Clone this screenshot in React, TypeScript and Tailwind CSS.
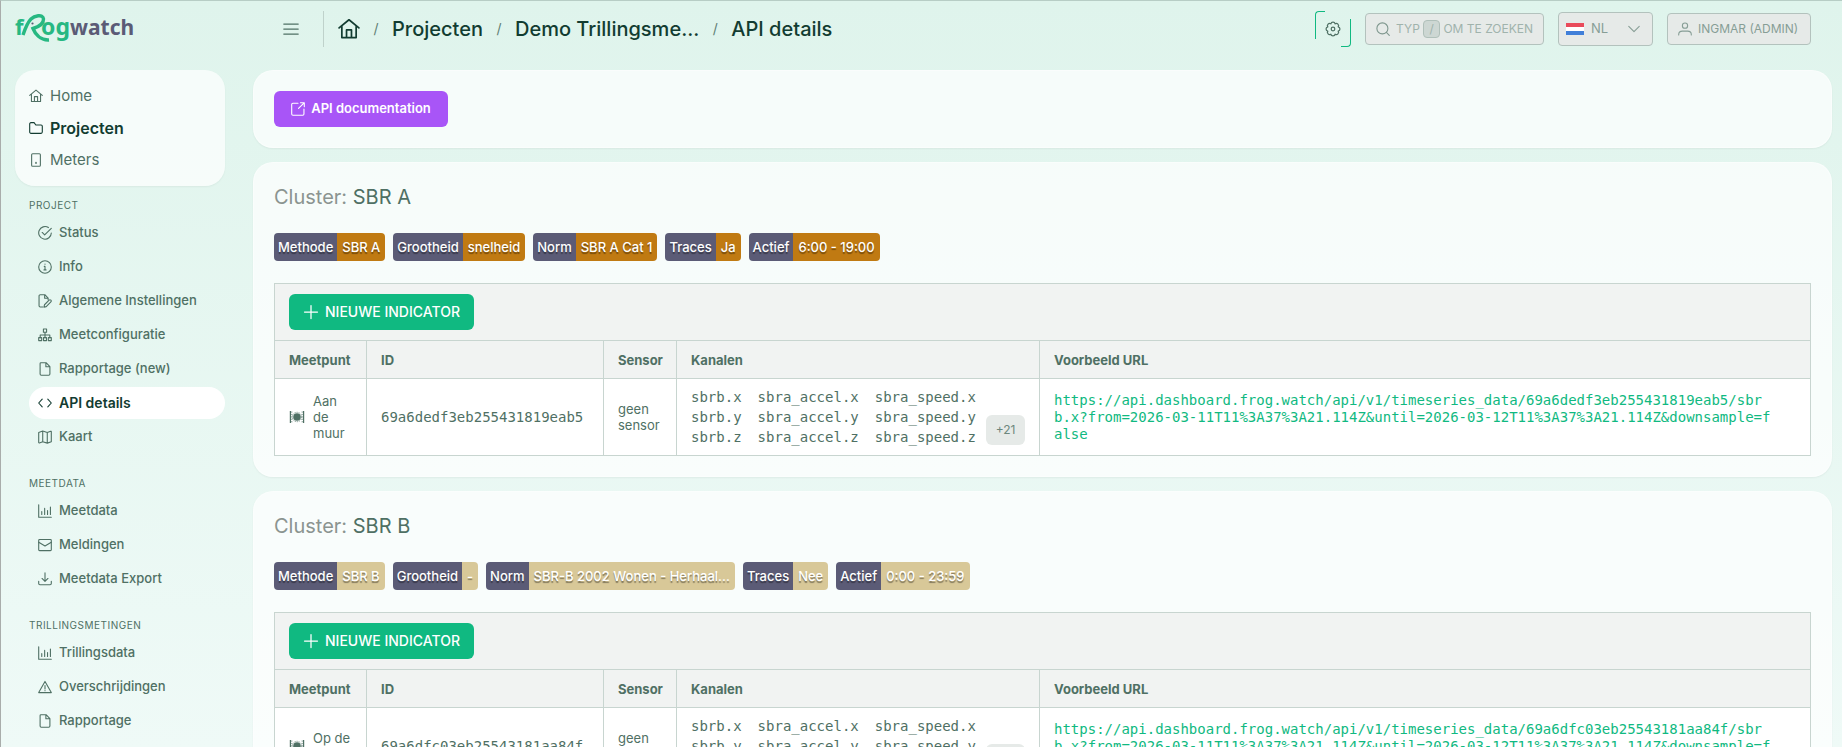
import React from 'react';

interface IconProps {
  className?: string;
}

interface NavItem {
  label: string;
  icon: (props: IconProps) => React.ReactNode;
  active?: boolean;
}

interface Cluster {
  name: string;
  enabled: boolean;
  badges: { label: string; value: string }[];
  point: string;
  id: string;
}

function Svg({ className = 'size-3.5', children }: IconProps & { children: React.ReactNode }) {
  return (
    <svg
      className={`shrink-0 ${className}`}
      viewBox="0 0 16 16"
      fill="none"
      stroke="currentColor"
      strokeWidth={1.25}
      strokeLinecap="round"
      strokeLinejoin="round"
      aria-hidden="true"
    >
      {children}
    </svg>
  );
}

const HomeIcon = (p: IconProps) => (
  <Svg {...p}>
    <path d="M.8 7.2 8 1.3l7.2 5.9M2.8 6v8.2h10.4V6M6.2 14.2V8.7h3.6v5.5" />
  </Svg>
);

const FolderIcon = (p: IconProps) => (
  <Svg {...p}>
    <path d="M.8 3.3c0-.8.6-1.4 1.4-1.4h3.6l2 2.7h6c.8 0 1.4.6 1.4 1.4v6.7c0 .8-.6 1.4-1.4 1.4H2.2c-.8 0-1.4-.6-1.4-1.4z" />
  </Svg>
);

const MeterIcon = (p: IconProps) => (
  <Svg {...p}>
    <rect x="3" y=".8" width="10" height="14.4" rx="1.2" />
    <path d="M8 10.8v.8" strokeWidth={1.8} />
  </Svg>
);

const StatusIcon = (p: IconProps) => (
  <Svg {...p}>
    <path d="M11.9 1.8A7.2 7.2 0 1 0 15.2 8M4.8 7.4l2.8 2.8 7.6-7.6" />
  </Svg>
);

const InfoIcon = (p: IconProps) => (
  <Svg {...p}>
    <circle cx="8" cy="8" r="7.2" />
    <path d="M7.2 7.3H8v4M6.8 11.3h2.4M8 4.6v.2" />
  </Svg>
);

const FileEditIcon = (p: IconProps) => (
  <Svg {...p}>
    <path d="M5.5 14.8H2.6c-.8 0-1.4-.6-1.4-1.4V2.2c0-.8.6-1.4 1.4-1.4h5.2l3.8 3.8v2M7.6 1v3.8h3.8" />
    <path d="m6.8 15 .6-2.7 5.3-5.2c.6-.6 1.4-.6 2 0s.6 1.4 0 2l-5.3 5.3z" />
  </Svg>
);

const SitemapIcon = (p: IconProps) => (
  <Svg {...p}>
    <rect x="6.2" y="1.2" width="3.6" height="3.6" />
    <rect x=".8" y="11" width="3.4" height="3.4" />
    <rect x="6.3" y="11" width="3.4" height="3.4" />
    <rect x="11.8" y="11" width="3.4" height="3.4" />
    <path d="M8 4.8V11M2.5 11V8h11v3" />
  </Svg>
);

const FileIcon = (p: IconProps) => (
  <Svg {...p}>
    <path d="M3.4.8h5.8l4.4 4.4v8.600c0 .8-.6 1.400-1.400 1.400H3.800c-.8 0-1.400-.6-1.400-1.400v-12c0-.6.400-1 1-1zM9 1v4.400h4.400" />
  </Svg>
);

const CodeIcon = (p: IconProps) => (
  <Svg {...p}>
    <path d="M4.8 3.6.8 8l4 4.4M11.2 3.6l4 4.4-4 4.4" />
  </Svg>
);

const MapIcon = (p: IconProps) => (
  <Svg {...p}>
    <path d="m.8 2.8 4.6-1.6 5.2 1.6 3.8-1.4c.4-.1.8.1.8.5v11.500l-4.600 1.600-5.200-1.600-3.800 1.400c-.4.1-.8-.1-.8-.5zM5.400 1.400v11.800M10.600 3v11.800" />
  </Svg>
);

const ChartIcon = (p: IconProps) => (
  <Svg {...p}>
    <path d="M.8.8v14.4h14.4M4.3 12V8.5M7.6 12V5M10.900 12V7.500M14.200 12V3.500" />
  </Svg>
);

const MailIcon = (p: IconProps) => (
  <Svg {...p}>
    <rect x=".8" y="1.8" width="14.4" height="12.6" rx="1" />
    <path d="m.8 4.8 7.2 4.4 7.2-4.4" />
  </Svg>
);

const ExportIcon = (p: IconProps) => (
  <Svg {...p}>
    <path d="M8 1v9.6M4.6 7.4 8 10.8l3.4-3.4M.8 10.6v2.6c0 .8.6 1.4 1.4 1.4h11.6c.8 0 1.4-.6 1.4-1.4v-2.6" />
  </Svg>
);

const WarningIcon = (p: IconProps) => (
  <Svg {...p}>
    <path d="M8 1.6 15.2 14.4H.8zM8 6.2v4M8 12.1v.2" />
  </Svg>
);

const GearIcon = (p: IconProps) => (
  <Svg {...p}>
    <path d="M13.2 5.85a2.200 2.200 0 0 1 0 4.300 2.200 2.200 0 0 1-3.050 3.050 2.200 2.200 0 0 1-4.300 0 2.200 2.200 0 0 1-3.050-3.050 2.200 2.200 0 0 1 0-4.300 2.200 2.200 0 0 1 3.050-3.050 2.200 2.200 0 0 1 4.300 0 2.200 2.200 0 0 1 3.050 3.050z" />
    <circle cx="8" cy="8" r="1.8" />
  </Svg>
);

const SearchIcon = (p: IconProps) => (
  <Svg {...p}>
    <circle cx="7.3" cy="7.3" r="6.3" />
    <path d="m11.9 11.9 3.3 3.3" />
  </Svg>
);

const UserIcon = (p: IconProps) => (
  <Svg {...p}>
    <circle cx="8" cy="4.2" r="3" />
    <path d="M.8 14.8v-.6c0-2.4 2-3.8 4.2-3.8h6c2.2 0 4.2 1.4 4.2 3.8v.6" />
  </Svg>
);

const ExternalIcon = (p: IconProps) => (
  <Svg {...p}>
    <path d="M8 1.5H2.2c-.8 0-1.4.6-1.4 1.4v10.9c0 .8.6 1.4 1.4 1.4h11.2c.8 0 1.4-.6 1.4-1.4V8M10.8.9h4.400v4.400M15 1 8.600 7.400" />
  </Svg>
);

const PlusIcon = (p: IconProps) => (
  <Svg {...p}>
    <path d="M8 1.5v13M1.5 8h13" />
  </Svg>
);

const ChevronIcon = (p: IconProps) => (
  <Svg {...p}>
    <path d="M2 5l6 6 6-6" />
  </Svg>
);

// Geophone between two vibrating walls
const SensorIcon = () => (
  <svg className="size-4 shrink-0" viewBox="0 0 16 16" fill="none" stroke="currentColor" aria-hidden="true">
    <circle cx="8" cy="8" r="3.8" fill="currentColor" stroke="none" />
    <circle cx="8" cy="8" r="4.7" strokeWidth={0.8} strokeDasharray="1 1" />
    <path d="M1.4 2v12M14.6 2v12" strokeWidth={1.2} />
    <path d="M2.8 2.5v11M13.2 2.5v11" strokeWidth={0.8} strokeDasharray="1.2 1.2" />
  </svg>
);

const Logo = () => (
  <svg className="h-8 w-30 overflow-visible" viewBox="0 0 120 32" role="img" aria-label="frogwatch">
    <g fontFamily="'Noto Sans', 'Open Sans', sans-serif" fontWeight={700}>
      <text x="0" y="22" fontSize={22} fill="#27b882">f</text>
      <text x="26" y="22" fontSize={23} fill="#27b882">og</text>
      <text x="55" y="22" fontSize={21} fill="#5b5b76">watch</text>
    </g>
    <path
      d="M8 22c2-6 4-12 8-16 3-3 12-5.5 12.5 0 .2 5-5.5 8-10.5 9.5 2 5 7 12 16 11.5"
      fill="none"
      stroke="#27b882"
      strokeWidth={3.4}
    />
    <circle cx="17.5" cy="10.5" r="1.9" fill="#dff4ec" />
    <circle cx="17.5" cy="10.5" r="1.1" fill="#5b5b76" />
  </svg>
);

const mainNav: NavItem[] = [
  { label: 'Home', icon: HomeIcon },
  { label: 'Projecten', icon: FolderIcon, active: true },
  { label: 'Meters', icon: MeterIcon },
];

const sections: { title: string; items: NavItem[] }[] = [
  {
    title: 'Project',
    items: [
      { label: 'Status', icon: StatusIcon },
      { label: 'Info', icon: InfoIcon },
      { label: 'Algemene Instellingen', icon: FileEditIcon },
      { label: 'Meetconfiguratie', icon: SitemapIcon },
      { label: 'Rapportage (new)', icon: FileIcon },
      { label: 'API details', icon: CodeIcon, active: true },
      { label: 'Kaart', icon: MapIcon },
    ],
  },
  {
    title: 'Meetdata',
    items: [
      { label: 'Meetdata', icon: ChartIcon },
      { label: 'Meldingen', icon: MailIcon },
      { label: 'Meetdata Export', icon: ExportIcon },
    ],
  },
  {
    title: 'Trillingsmetingen',
    items: [
      { label: 'Trillingsdata', icon: ChartIcon },
      { label: 'Overschrijdingen', icon: WarningIcon },
      { label: 'Rapportage', icon: FileIcon },
    ],
  },
];

const clusters: Cluster[] = [
  {
    name: 'SBR A',
    enabled: true,
    badges: [
      { label: 'Methode', value: 'SBR A' },
      { label: 'Grootheid', value: 'snelheid' },
      { label: 'Norm', value: 'SBR A Cat 1' },
      { label: 'Traces', value: 'Ja' },
      { label: 'Actief', value: '6:00 - 19:00' },
    ],
    point: 'Aan de muur',
    id: '69a6dedf3eb255431819eab5',
  },
  {
    name: 'SBR B',
    enabled: false,
    badges: [
      { label: 'Methode', value: 'SBR B' },
      { label: 'Grootheid', value: '-' },
      { label: 'Norm', value: 'SBR-B 2002 Wonen - Herhaal...' },
      { label: 'Traces', value: 'Nee' },
      { label: 'Actief', value: '0:00 - 23:59' },
    ],
    point: 'Op de vloer',
    id: '69a6dfc03eb25543181aa84f',
  },
];

const channels = ['sbrb', 'sbra_accel', 'sbra_speed'];
const axes = ['x', 'y', 'z'];

const exampleUrl = (id: string) =>
  `https://api.dashboard.frog.watch/api/v1/timeseries_data/${id}/sbrb.x?from=2026-03-11T11%3A37%3A21.114Z&until=2026-03-12T11%3A37%3A21.114Z&downsample=false`;

function Header() {
  return (
    <header className="flex h-14 shrink-0 items-center pr-[31px] pl-3.5 text-[#123c31]">
      <a href="#" className="w-[268px] shrink-0">
        <Logo />
      </a>
      <button type="button" aria-label="Menu" className="text-[#4f7064]">
        <Svg className="size-4">
          <path d="M.8 3h14.400M.8 8h14.400M.8 13h14.400" />
        </Svg>
      </button>
      <nav className="ml-6 flex h-9 items-center border-l border-[#bfd2cb] pl-3.5 text-xl font-medium">
        <a href="#" aria-label="Home">
          <HomeIcon className="size-[22px]" />
        </a>
        <span className="w-8 text-center text-sm font-normal text-[#5f8075]">/</span>
        <a href="#">Projecten</a>
        <span className="w-8 text-center text-sm font-normal text-[#5f8075]">/</span>
        <a href="#">Demo Trillingsme...</a>
        <span className="w-8 text-center text-sm font-normal text-[#5f8075]">/</span>
        <a href="#">API details</a>
      </nav>
      <div className="ml-auto flex items-center gap-3.5 text-xs whitespace-nowrap text-[#879e96]">
        <button type="button" aria-label="Instellingen" className="relative flex size-9 items-center justify-center text-[#4f7064]">
          <span className="absolute top-0 left-0 h-7 w-2.5 rounded-tl border-t border-l border-[#10b981]" />
          <span className="absolute right-0 bottom-0 h-7 w-2.5 rounded-br border-r border-b border-[#10b981]" />
          <GearIcon className="size-4" />
        </button>
        <button type="button" className="flex h-8 w-[179px] items-center rounded border border-[#b3c2bd] bg-[#e6eae8] px-2.5 text-[#a0b3ac]">
          <SearchIcon className="mr-1.5 size-3.5 text-[#7f978e]" />
          TYP
          <kbd className="mx-[3px] flex h-[18px] w-[19px] items-center justify-center rounded border border-[#b0c0ba] bg-[#cdd7d3] font-[Inter] text-xs">/</kbd>
          OM TE ZOEKEN
        </button>
        <div className="relative">
          <svg className="absolute top-[11px] left-2 h-3 w-[18px]" viewBox="0 0 18 12" aria-hidden="true">
            <path d="M0 0h18v4H0z" fill="#e94b5b" />
            <path d="M0 4h18v4H0z" fill="#fff" />
            <path d="M0 8h18v4H0z" fill="#4080d9" />
          </svg>
          <select aria-label="Taal" className="h-[34px] w-[95px] appearance-none rounded border border-[#b3c2bd] bg-[#e6eae8] pl-8 text-[13px]">
            <option>NL</option>
          </select>
          <ChevronIcon className="pointer-events-none absolute top-2.5 right-3 size-3.5" />
        </div>
        <button type="button" className="flex h-8 w-36 items-center gap-1.5 rounded border border-[#b3c2bd] bg-[#e6eae8] px-2.5">
          <UserIcon className="size-3.5" />
          INGMAR (ADMIN)
        </button>
      </div>
    </header>
  );
}

function Sidebar() {
  return (
    <aside className="w-[210px] shrink-0 text-[#4f7064]">
      <nav className="mb-[11px] rounded-[20px] bg-white/70 px-3.5 py-2.5 shadow-xs">
        {mainNav.map(({ label, icon: Icon, active }) => (
          <a
            key={label}
            href="#"
            className={`flex h-8 items-center gap-[7px] ${active ? 'text-base font-semibold text-[#123c31]' : 'text-[15px]'}`}
          >
            <Icon />
            {label}
          </a>
        ))}
      </nav>
      <div className="flex flex-col gap-[22px]">
        {sections.map((section) => (
          <nav key={section.title} className="pl-3.5">
            <h2 className="mb-1 text-[10px] leading-4 tracking-wider uppercase">{section.title}</h2>
            <ul className="flex flex-col gap-0.5">
              {section.items.map(({ label, icon: Icon, active }) => (
                <li key={label}>
                  <a
                    href="#"
                    className={`flex h-8 items-center gap-[7px] rounded-full px-[9px] ${
                      active ? 'bg-white text-sm font-semibold text-[#123c31]' : 'text-[13px] font-medium'
                    }`}
                  >
                    <Icon />
                    {label}
                  </a>
                </li>
              ))}
            </ul>
          </nav>
        ))}
      </div>
    </aside>
  );
}

function ClusterCard({ cluster }: { cluster: Cluster }) {
  return (
    <section className="rounded-[20px] border border-white/40 bg-white/70 p-5 shadow-xs">
      <h1 className="mb-[22px] text-xl leading-7 text-[#4f7064]">
        <span className="text-[#8b9490]">Cluster:</span> {cluster.name}
      </h1>
      <div className="mb-[22px] flex flex-wrap gap-2 text-[13px] leading-7 font-medium text-white text-shadow-[0_2px_1px_rgb(0_0_0/0.4)]">
        {cluster.badges.map(({ label, value }) => (
          <span key={label} className="flex overflow-hidden rounded">
            <span className="bg-[#5b5b76] px-1">{label}</span>
            <span className={`px-[5px] ${cluster.enabled ? 'bg-[#c07a12]' : 'bg-[#d8c898]'}`}>{value}</span>
          </span>
        ))}
      </div>
      <div className="border border-b-0 border-[#c8d5d0] bg-[#f1f3f2] px-3.5 py-2.5">
        <button type="button" className="flex h-9 w-[185px] items-center justify-center gap-1.5 rounded-md bg-[#10b981] text-sm font-medium whitespace-nowrap text-white">
          <PlusIcon className="size-4" />
          NIEUWE INDICATOR
        </button>
      </div>
      <table className="w-full table-fixed border-collapse text-left text-[13px] leading-4 text-[#4f7064] [&_td]:border [&_td]:border-[#c8d5d0] [&_td]:px-3.5 [&_th]:border [&_th]:border-[#c8d5d0] [&_th]:px-3.5">
        <thead className="bg-[#f1f3f2]">
          <tr className="h-[38px]">
            <th className="w-[92px]">Meetpunt</th>
            <th className="w-[237px]">ID</th>
            <th className="w-[73px]">Sensor</th>
            <th className="w-[363px]">Kanalen</th>
            <th>Voorbeeld URL</th>
          </tr>
        </thead>
        <tbody className="bg-white">
          <tr className="h-[77px]">
            <td>
              <div className="flex items-center gap-2">
                <SensorIcon />
                <span>{cluster.point}</span>
              </div>
            </td>
            <td className="font-['DejaVu_Sans_Mono',monospace] text-sm">{cluster.id}</td>
            <td>geen sensor</td>
            <td>
              <div className="flex items-end justify-between">
                <div className="flex gap-4 font-['DejaVu_Sans_Mono',monospace] text-sm leading-5">
                  {channels.map((channel) => (
                    <ul key={channel}>
                      {axes.map((axis) => (
                        <li key={axis}>
                          {channel}.{axis}
                        </li>
                      ))}
                    </ul>
                  ))}
                </div>
                <button type="button" className="mb-0.5 h-[30px] w-[39px] shrink-0 rounded-md bg-[#e6eae8] text-xs text-[#6d877d]">
                  +21
                </button>
              </div>
            </td>
            <td>
              <a href="#" className="block max-w-[720px] font-['DejaVu_Sans_Mono',monospace] text-sm leading-[17px] break-all text-[#10b981]">
                {exampleUrl(cluster.id)}
              </a>
            </td>
          </tr>
        </tbody>
      </table>
    </section>
  );
}

export default function App() {
  return (
    <div className="flex h-screen flex-col overflow-hidden border-t border-l border-t-[#b7cdc5] border-l-[#a9adab] bg-linear-to-b from-[#dff4ec] to-[#effaf7] font-[Inter,sans-serif]">
      <Header />
      <div className="flex min-h-0 flex-1 gap-7 pt-[13px] pr-2.5 pl-3.5">
        <Sidebar />
        <main className="flex min-w-0 flex-1 flex-col gap-3.5">
          <section className="rounded-[20px] border border-white/40 bg-white/70 p-5 shadow-xs">
            <a href="#" className="flex h-9 w-[174px] items-center justify-center gap-1.5 rounded-md bg-[#a855f7] text-[13px] font-semibold whitespace-nowrap text-white">
              <ExternalIcon />
              API documentation
            </a>
          </section>
          {clusters.map((cluster) => (
            <ClusterCard key={cluster.name} cluster={cluster} />
          ))}
        </main>
      </div>
    </div>
  );
}
